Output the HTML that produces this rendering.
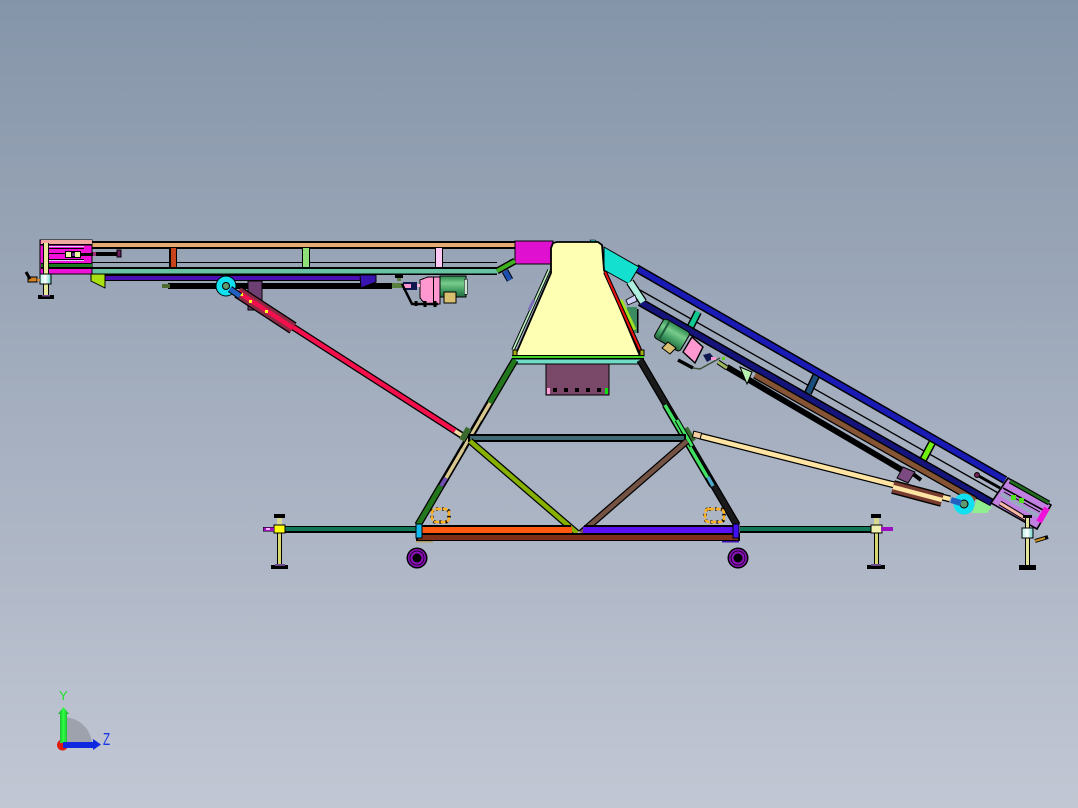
<!DOCTYPE html>
<html><head><meta charset="utf-8"><style>
html,body{margin:0;padding:0;width:1078px;height:808px;overflow:hidden;background:#a5afbf}
svg{display:block}
text{font-family:"Liberation Sans",sans-serif}
</style></head><body>
<svg width="1078" height="808" viewBox="0 0 1078 808" xmlns="http://www.w3.org/2000/svg">
<defs>
<linearGradient id="bg" x1="0" y1="0" x2="0" y2="1"><stop offset="0" stop-color="#8595a9"/><stop offset="1" stop-color="#c2c7d4"/></linearGradient>
<linearGradient id="mot" x1="0" y1="0" x2="0" y2="1"><stop offset="0" stop-color="#2f8a50"/><stop offset=".35" stop-color="#78cc8c"/><stop offset=".7" stop-color="#3f9a60"/><stop offset="1" stop-color="#23683f"/></linearGradient>
<linearGradient id="col" x1="0" y1="0" x2="1" y2="0"><stop offset="0" stop-color="#b0f0e8"/><stop offset=".5" stop-color="#fff"/><stop offset="1" stop-color="#60d0c8"/></linearGradient>
<linearGradient id="yarrow" x1="0" y1="0" x2="1" y2="0"><stop offset="0" stop-color="#10a030"/><stop offset=".5" stop-color="#30ff40"/><stop offset="1" stop-color="#10a030"/></linearGradient>
</defs>
<rect width="1078" height="808" fill="url(#bg)"/>

<g shape-rendering="crispEdges">
<!-- LEFT CONVEYOR -->
<rect x="92" y="241" width="423" height="8" fill="#000"/><rect x="92" y="243" width="423" height="4" fill="#e5aa72"/>
<rect x="92" y="262" width="405" height="1" fill="#000"/>
<rect x="169" y="248" width="8" height="20" fill="#000"/><rect x="171" y="248" width="5" height="20" fill="#c8421a"/>
<rect x="302" y="248" width="8" height="20" fill="#000"/><rect x="303" y="248" width="6" height="20" fill="#90e078"/>
<rect x="435" y="248" width="8" height="20" fill="#000"/><rect x="436" y="248" width="6" height="20" fill="#ffc8f4"/>
<rect x="92" y="267" width="405" height="8" fill="#000"/><rect x="92" y="269" width="405" height="4.500" fill="#66c2a2"/>
<rect x="105" y="275" width="256" height="6" fill="#000"/><rect x="105" y="276" width="256" height="4" fill="#4a10b4"/>
<rect x="168" y="283" width="224" height="6" fill="#000"/>
<rect x="162" y="284" width="8" height="4" fill="#4e6a30"/><rect x="392" y="283" width="12" height="5" fill="#5a8040"/>
<rect x="248" y="281" width="14" height="29" fill="#6e3f72" stroke="#000"/>
<polygon points="91,274 105,274 105,288 91,281" fill="#a8e010" stroke="#000"/>
<rect x="515" y="241" width="38" height="23" fill="#e010d0" stroke="#000"/>
</g>
<polygon points="360,275 376,275 376,282 361,288" fill="#3a14b0" stroke="#000"/>
<path d="M497 271L515 261" stroke="#000" stroke-width="7"/><path d="M497 271L515 261" stroke="#40b020" stroke-width="4"/>
<path d="M505 271L510 280" stroke="#000" stroke-width="7"/><path d="M505 271L510 280" stroke="#1c50b0" stroke-width="5"/>

<!-- LEFT HEAD -->
<g shape-rendering="crispEdges">
<rect x="40" y="240" width="52" height="34" fill="#f010d8" stroke="#000"/>
<rect x="41" y="240" width="51" height="4" fill="#f0a8a0"/>
<rect x="40" y="244" width="52" height="1.500" fill="#000"/>
<rect x="48" y="246" width="36" height="1" fill="#d8c8ff"/>
<rect x="48" y="248" width="36" height="1" fill="#000"/>
<rect x="48" y="253" width="17" height="1" fill="#000"/>
<rect x="65" y="251" width="16" height="7" fill="#000"/>
<rect x="66" y="252" width="5" height="5" fill="#e8f8a0"/><rect x="75" y="252" width="5" height="5" fill="#e8f8a0"/><rect x="72" y="253" width="3" height="3" fill="#60308a"/>
<rect x="81" y="253" width="11" height="3" fill="#000"/>
<rect x="48" y="259" width="36" height="1" fill="#000"/>
<rect x="48" y="260" width="36" height="1" fill="#d8c8ff"/>
<rect x="41" y="263" width="51" height="6" fill="#000"/><rect x="41" y="264" width="51" height="3" fill="#1d7a20"/>
<rect x="92" y="252" width="28" height="4" fill="#000"/>
<rect x="93" y="252" width="3" height="4" fill="#a0307a"/>
<rect x="117" y="250" width="4" height="7" fill="#702060" stroke="#000"/>
<!-- left jack -->
<rect x="43" y="243" width="6" height="52" fill="#000"/><rect x="44" y="243" width="4" height="52" fill="#e8e89a"/>
<rect x="40" y="274" width="11" height="10" fill="url(#col)" stroke="#000"/>
<rect x="38" y="295" width="16" height="4" fill="#000"/><rect x="42" y="295" width="8" height="1.500" fill="#7a4a9a"/>
<rect x="28" y="277" width="9" height="5" fill="#d08020" stroke="#000"/><rect x="37" y="279" width="3" height="2" fill="#d08020"/>
</g>
<path d="M26 272L30 279" stroke="#000" stroke-width="3"/>

<!-- LEFT MOTOR -->
<g shape-rendering="crispEdges">
<polygon points="420,280 428,277 440,277 440,304 425,304 420,298" fill="#ff98d0" stroke="#000"/>
<rect x="433" y="277" width="1" height="27" fill="#000"/>
<rect x="440" y="276" width="26" height="21" fill="url(#mot)" stroke="#000"/>
<rect x="464" y="279" width="3" height="15" fill="#c8e8d0" stroke="#000" stroke-width=".5"/>
<rect x="444" y="292" width="12" height="11" fill="#d8c070" stroke="#000"/>
<rect x="403" y="282" width="14" height="8" fill="#101850"/>
<rect x="404" y="284" width="7" height="4" fill="#ff98d0"/>
<rect x="417" y="284" width="3" height="3" fill="#ffb0d8"/>
<rect x="395" y="275" width="8" height="3" fill="#000"/><rect x="397" y="278" width="4" height="3" fill="#5a8040"/>
</g>
<path d="M402 284L412 304H438" fill="none" stroke="#000" stroke-width="2.500"/>
<path d="M416 301v5M425 301v6M435 301v6" stroke="#000" stroke-width="3"/>

<!-- RIGHT CONVEYOR -->
<path d="M636 268L1005 480" stroke="#000" stroke-width="8.500"/><path d="M636 268L1005 480" stroke="#1a1ab4" stroke-width="5.500"/>
<path d="M640 290L1000 494" stroke="#000" stroke-width="1.300" fill="none"/>
<path d="M698 312L690 328" stroke="#000" stroke-width="8"/><path d="M698 312L690 328" stroke="#10c890" stroke-width="5"/>
<path d="M816 376L808 393" stroke="#000" stroke-width="8"/><path d="M816 376L808 393" stroke="#1a4e7a" stroke-width="5"/>
<path d="M932 443L923 460" stroke="#000" stroke-width="8"/><path d="M932 443L923 460" stroke="#70f010" stroke-width="5"/>
<path d="M640 302L992 503" stroke="#000" stroke-width="8.500"/><path d="M640 302L992 503" stroke="#14147a" stroke-width="5.500"/>
<path d="M755 375L975 500" stroke="#000" stroke-width="7.500"/><path d="M755 375L975 500" stroke="#855434" stroke-width="5"/>
<path d="M727 367L902 470" stroke="#000" stroke-width="6"/>
<polygon points="740,367 752,372 747,384" fill="#b8f0b0" stroke="#000"/>
<polygon points="604,247 639,267 629,284 604,270" fill="#14e0d0" stroke="#000"/>
<path d="M630 282L643 302" stroke="#000" stroke-width="8.500"/><path d="M630 282L643 302" stroke="#b0f0e0" stroke-width="6"/>
<polygon points="626,300 635,295 637,301 628,305" fill="#d0d0f8" stroke="#000" stroke-width=".8"/>
<rect x="627" y="307" width="10" height="26" fill="#3c8a60"/><rect x="637" y="309" width="1.500" height="24" fill="#000"/>
<path d="M590 240h5l3 3h-6z" fill="#20d0c0" stroke="#000" stroke-width=".6"/>

<!-- RIGHT MOTOR -->
<g transform="rotate(30 672 335)">
<rect x="657" y="324" width="30" height="22" rx="3" fill="url(#mot)" stroke="#000"/>
<rect x="662" y="324" width="2" height="22" fill="#1f5a38"/>
</g>
<polygon points="662,348 668,342 676,348 670,354" fill="#d8c070" stroke="#000"/>
<polygon points="683,352 692,337 703,347 695,363" fill="#ff98d0" stroke="#000" stroke-width="1.400"/>
<path d="M678 360L693 368" fill="none" stroke="#000" stroke-width="3.500"/>
<path d="M693 368L700 369L720 358" fill="none" stroke="#3c5038" stroke-width="1.500"/>
<path d="M703 355l7 -2 4 5 -7 4z" fill="#101850"/><rect x="711" y="357" width="5" height="3" fill="#ff98d0"/>
<path d="M718 362L727 368" stroke="#000" stroke-width="5"/><path d="M718 362L727 368" stroke="#a0b860" stroke-width="3"/>
<rect x="722" y="357" width="3" height="3" fill="#60d020"/>

<!-- HOPPER -->
<polygon points="553,243 557,242 598,242 602,245 604,270 640,356 515,356 551,273 551,248" fill="#ffffb4" stroke="#000" stroke-width="1.800"/>
<path d="M620 300L634 330" stroke="#a0e020" stroke-width="5"/>
<path d="M605 272L641 352" stroke="#000" stroke-width="4"/><path d="M605 272L641 352" stroke="#f01010" stroke-width="2"/>
<path d="M549 270L513 350" stroke="#000" stroke-width="3.500"/><path d="M549 270L513 350" stroke="#b8f0c0" stroke-width="1.600"/>
<path d="M534 300L529 310" stroke="#7a6ab8" stroke-width="3"/>
<g shape-rendering="crispEdges">
<rect x="513" y="350" width="4" height="6" fill="#a8b010" stroke="#000" stroke-width=".6"/>
<rect x="640" y="350" width="4" height="6" fill="#a8b010" stroke="#000" stroke-width=".6"/>
<rect x="512" y="355" width="132" height="4" fill="#000"/><rect x="512" y="356" width="132" height="2" fill="#40d020"/>
<rect x="512" y="359" width="131" height="5" fill="#70dcc8" stroke="#000" stroke-width=".8"/>
<rect x="546" y="364" width="63" height="31" fill="#7a4868" stroke="#000"/>
<rect x="547" y="388" width="3" height="6" fill="#ffa0d8"/><rect x="605" y="388" width="3" height="6" fill="#10e010"/>
<rect x="553" y="388" width="4" height="4" fill="#000"/><rect x="564" y="388" width="4" height="4" fill="#000"/><rect x="575" y="388" width="4" height="4" fill="#000"/><rect x="586" y="388" width="4" height="4" fill="#000"/><rect x="597" y="388" width="4" height="4" fill="#000"/>
</g>

<!-- LEFT CYLINDER -->
<path d="M240 293L455 431" stroke="#000" stroke-width="7"/><path d="M240 293L455 431" stroke="#f4104c" stroke-width="4.500"/>
<path d="M238 292L293 328" stroke="#000" stroke-width="13"/><path d="M238 292L293 328" stroke="#8a2a44" stroke-width="10.500"/><path d="M238 292L293 328" stroke="#f4104c" stroke-width="4.500"/>
<rect x="240" y="293" width="3" height="3" fill="#ffff20"/><rect x="249" y="300" width="3" height="3" fill="#ffff20"/><rect x="265" y="310" width="3" height="3" fill="#ffff20"/>
<path d="M455 431L466 438" stroke="#000" stroke-width="7"/><path d="M455 431L466 438" stroke="#f0d8a0" stroke-width="4"/>

<!-- LEGS -->
<path d="M515 360L418 525" stroke="#000" stroke-width="7.500"/><path d="M515 360L418 525" stroke="#22761c" stroke-width="5"/>
<path d="M490 403L442 485" stroke="#000" stroke-width="6.500"/><path d="M490 403L442 485" stroke="#d8c890" stroke-width="3.500"/>
<path d="M446 478L441 486" stroke="#000" stroke-width="7"/><path d="M446 478L441 486" stroke="#7050b0" stroke-width="4"/>
<path d="M640 360L737 525" stroke="#000" stroke-width="7.500"/><path d="M640 360L737 525" stroke="#1a1a1a" stroke-width="5"/>
<path d="M665 405L712 485" stroke="#000" stroke-width="6.500"/><path d="M665 405L712 485" stroke="#40e060" stroke-width="3.500"/>
<path d="M708 477L713 486" stroke="#000" stroke-width="6.500"/><path d="M708 477L713 486" stroke="#50a8c8" stroke-width="3.500"/>
<path d="M470 429L463 441" stroke="#3a6a30" stroke-width="9"/>
<path d="M684 429L692 442" stroke="#3a6a30" stroke-width="9"/>
<path d="M480 420L463 449" stroke="#000" stroke-width="5"/><path d="M480 420L463 449" stroke="#d8c890" stroke-width="3"/>
<path d="M677 420L692 446" stroke="#000" stroke-width="5"/><path d="M677 420L692 446" stroke="#40e060" stroke-width="3"/>

<!-- CROSS MEMBERS -->
<g shape-rendering="crispEdges">
<rect x="468" y="434" width="218" height="8" fill="#000"/><rect x="470" y="436" width="214" height="4" fill="#3f6a74"/>
</g>
<path d="M470 441L577 533" stroke="#000" stroke-width="7"/><path d="M470 441L577 533" stroke="#88b000" stroke-width="4.500"/>
<path d="M687 441L581 533" stroke="#000" stroke-width="7"/><path d="M687 441L581 533" stroke="#745244" stroke-width="4.500"/>

<!-- OUTRIGGERS / BASE -->
<g shape-rendering="crispEdges">
<rect x="285" y="526" width="131" height="7" fill="#000"/><rect x="285" y="527" width="131" height="4" fill="#107858"/>
<rect x="740" y="526" width="131" height="7" fill="#000"/><rect x="740" y="527" width="131" height="4" fill="#107858"/>
<rect x="421" y="525" width="150" height="9" fill="#000"/><rect x="422" y="527" width="150" height="6" fill="#ff5a10"/>
<rect x="584" y="525" width="150" height="9" fill="#000"/><rect x="583" y="527" width="151" height="6" fill="#5a10f0"/>
<rect x="416" y="533" width="324" height="8" fill="#000"/><rect x="418" y="535" width="320" height="5" fill="#803018"/>
<rect x="416" y="524" width="6" height="14" fill="#10b8f0" stroke="#000"/>
<rect x="733" y="524" width="6" height="14" fill="#4010f0" stroke="#000"/>
<rect x="416" y="541" width="17" height="1.400" fill="#b0a060"/>
<rect x="722" y="541" width="17" height="1.400" fill="#4010b0"/>
</g>

<!-- WHEELS -->
<g>
<circle cx="417" cy="558" r="10.500" fill="#000"/><circle cx="417" cy="558" r="9" fill="#8a10b8"/><circle cx="417" cy="558" r="7" fill="none" stroke="#000" stroke-width=".7"/><circle cx="417" cy="558" r="4.500" fill="#000"/>
<circle cx="738" cy="558" r="10.500" fill="#000"/><circle cx="738" cy="558" r="9" fill="#8a10b8"/><circle cx="738" cy="558" r="7" fill="none" stroke="#000" stroke-width=".7"/><circle cx="738" cy="558" r="4.500" fill="#000"/>
</g>

<!-- RINGS -->
<rect x="432" y="509" width="17" height="13" rx="4" fill="none" stroke="#000" stroke-width="3.500" stroke-dasharray="2 4"/>
<rect x="432" y="509" width="17" height="13" rx="4" fill="none" stroke="#ffb020" stroke-width="2.400" stroke-dasharray="5 1.500"/>
<rect x="705" y="509" width="19" height="13" rx="4" fill="none" stroke="#000" stroke-width="3.500" stroke-dasharray="2 4"/>
<rect x="705" y="509" width="19" height="13" rx="4" fill="none" stroke="#ffb020" stroke-width="2.400" stroke-dasharray="5 1.500"/>

<!-- RIGHT CYLINDER -->
<polygon points="897,478 903,467 915,472 908,483" fill="#7a4a80" stroke="#000"/>
<path d="M913 474L921 480" stroke="#000" stroke-width="4"/>
<path d="M700 436L950 499" stroke="#000" stroke-width="7"/><path d="M700 436L950 499" stroke="#ffe4a4" stroke-width="4.500"/>
<path d="M893 487L942 500" stroke="#000" stroke-width="14"/><path d="M893 487L942 500" stroke="#7a3c30" stroke-width="11"/><path d="M893 487L942 500" stroke="#ffe4a4" stroke-width="4.500"/>
<rect x="693" y="432" width="8" height="6" fill="#f4d0a0" stroke="#000" transform="rotate(14 697 435)"/>

<!-- WHEELS CYAN -->
<circle cx="226" cy="286" r="10" fill="#10e0f0" stroke="#000"/><circle cx="226" cy="286" r="3.500" fill="#609870" stroke="#000"/>
<path d="M230 289L240 296" stroke="#000" stroke-width="7"/><path d="M230 289L240 296" stroke="#2060c0" stroke-width="5"/>
<polygon points="977,499 992,507 987,513 972,513" fill="#90f090"/>
<circle cx="964" cy="504" r="10.500" fill="#10e0f0"/><circle cx="964" cy="504" r="4" fill="#609870" stroke="#000"/>
<path d="M951 500L961 503" stroke="#2060c0" stroke-width="6"/>

<!-- RIGHT HEAD -->
<polygon points="1008,478 1051,505 1037,529 991,503" fill="#c080e0" stroke="#000" stroke-width="1.600"/>
<path d="M1010 481L1049 503" stroke="#000" stroke-width="5"/><path d="M1010 481L1049 503" stroke="#1f6a1f" stroke-width="2.800"/>
<path d="M1003 488L1043 510" stroke="#000" stroke-width="1.600"/>
<path d="M1001 494L1038 516" stroke="#98a8c0" stroke-width="4"/>
<path d="M1004 492L1040 512" stroke="#000" stroke-width="1"/>
<path d="M1000 503L1028 520" stroke="#000" stroke-width="5"/><path d="M1000 503L1028 520" stroke="#f8b8a8" stroke-width="3"/>
<rect x="1011" y="495" width="5" height="5" fill="#50e020"/><rect x="1019" y="498" width="5" height="5" fill="#50e020"/>
<path d="M1047 508L1039 522" stroke="#f010d8" stroke-width="6"/>
<path d="M977 475L1000 488" stroke="#000" stroke-width="3"/><circle cx="977" cy="475" r="2.500" fill="#702050" stroke="#000"/>
<!-- right far jack -->
<g shape-rendering="crispEdges">
<rect x="1025" y="518" width="5" height="48" fill="#000"/><rect x="1026" y="518" width="3" height="48" fill="#e4e49a"/>
<rect x="1022" y="528" width="11" height="10" fill="url(#col)" stroke="#000"/>
<rect x="1019" y="565" width="17" height="5" fill="#000"/>
<rect x="1023" y="515" width="9" height="3" fill="#000"/>
</g>
<path d="M1035 541L1048 537" stroke="#000" stroke-width="4"/><path d="M1035 541L1045 538" stroke="#c89020" stroke-width="2"/>

<!-- FIXED JACKS -->
<g shape-rendering="crispEdges">
<rect x="274" y="514" width="11" height="4" fill="#000"/><rect x="277" y="518" width="5" height="8" fill="#d8d890"/>
<rect x="277" y="533" width="5" height="32" fill="#000"/><rect x="278" y="533" width="3" height="32" fill="#d8d870"/>
<rect x="274" y="525" width="11" height="8" fill="#ffff10" stroke="#000"/>
<rect x="263" y="527" width="11" height="4" fill="#9a10c0" stroke="#000" stroke-width=".5"/><rect x="266" y="528" width="4" height="2" fill="#ffb0ff"/>
<rect x="271" y="565" width="17" height="4" fill="#000"/><rect x="275" y="564" width="10" height="2" fill="#6a4a8a"/>
<rect x="871" y="514" width="10" height="4" fill="#000"/><rect x="874" y="518" width="5" height="8" fill="#d8d890"/>
<rect x="874" y="533" width="5" height="32" fill="#000"/><rect x="875" y="533" width="3" height="32" fill="#d8d870"/>
<rect x="871" y="525" width="11" height="8" fill="#f0f0b0" stroke="#000"/>
<rect x="881" y="527" width="12" height="4" fill="#9a10c0"/>
<rect x="867" y="565" width="18" height="4" fill="#000"/><rect x="871" y="564" width="10" height="2" fill="#6a4a8a"/>
</g>

<!-- TRIAD -->
<path d="M63 745V717A29 28 0 0 1 92 745Z" fill="#9ea2ac"/>
<circle cx="62.500" cy="745" r="5.500" fill="#e01a10"/>
<path d="M60 743V714H58L63.500 707L69 714H67V743Z" fill="url(#yarrow)"/>
<path d="M63 742H93V739L101 744.500L93 750V748H63Z" fill="#1028e0"/>
<text x="59" y="700" font-size="13" fill="#20e030">Y</text>
<text transform="translate(103 745) scale(.65 1)" font-size="18" fill="#1838e8">Z</text>
</svg>
</body></html>
